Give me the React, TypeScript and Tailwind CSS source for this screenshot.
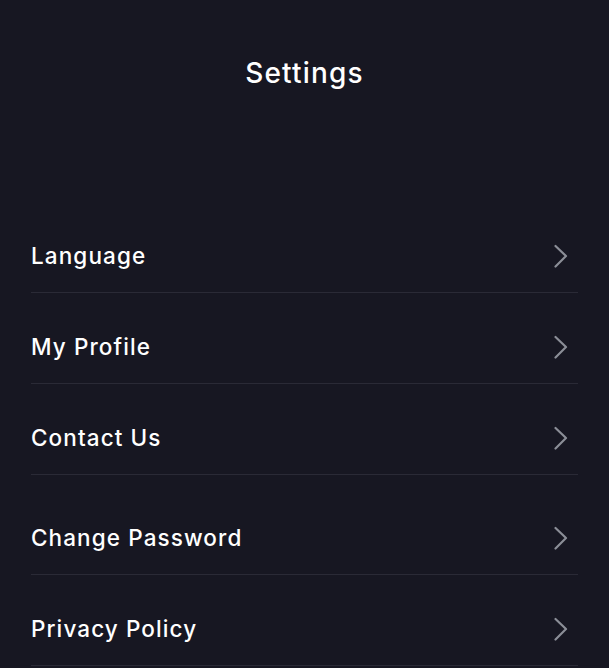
const ITEMS = [
  { label: 'Language' },
  { label: 'My Profile' },
  { label: 'Contact Us' },
  { label: 'Change Password', gap: true },
  { label: 'Privacy Policy' },
];

function Chevron() {
  return (
    <svg width="16" height="24" viewBox="0 0 16 24" fill="none" className="shrink-0">
      <path d="M2.5 2 L13 12 L2.5 22.5" stroke="#8b8e97" strokeWidth="2.2" strokeLinecap="round" strokeLinejoin="round" />
    </svg>
  );
}

export default function App() {
  return (
    <div
      className="min-h-[668px] bg-[#171722] text-white"
      style={{ fontFamily: 'Inter, "Noto Sans", sans-serif' }}
    >
      <h1 className="pt-[56px] text-center text-[28px] leading-[34px] font-medium tracking-[1.2px]">
        Settings
      </h1>

      <div className="mt-[112px] px-[31px]">
        {ITEMS.map(item => (
          <button
            key={item.label}
            className={`flex w-full items-center justify-between border-b border-[#2a2a36] pb-[20px] text-left ${
              item.gap ? 'pt-[46px]' : 'pt-[37px]'
            }`}
          >
            <span className="text-[22.5px] leading-[33px] font-medium tracking-[1.1px]">{item.label}</span>
            <span className="pr-[9px]">
              <Chevron />
            </span>
          </button>
        ))}
      </div>
    </div>
  );
}
